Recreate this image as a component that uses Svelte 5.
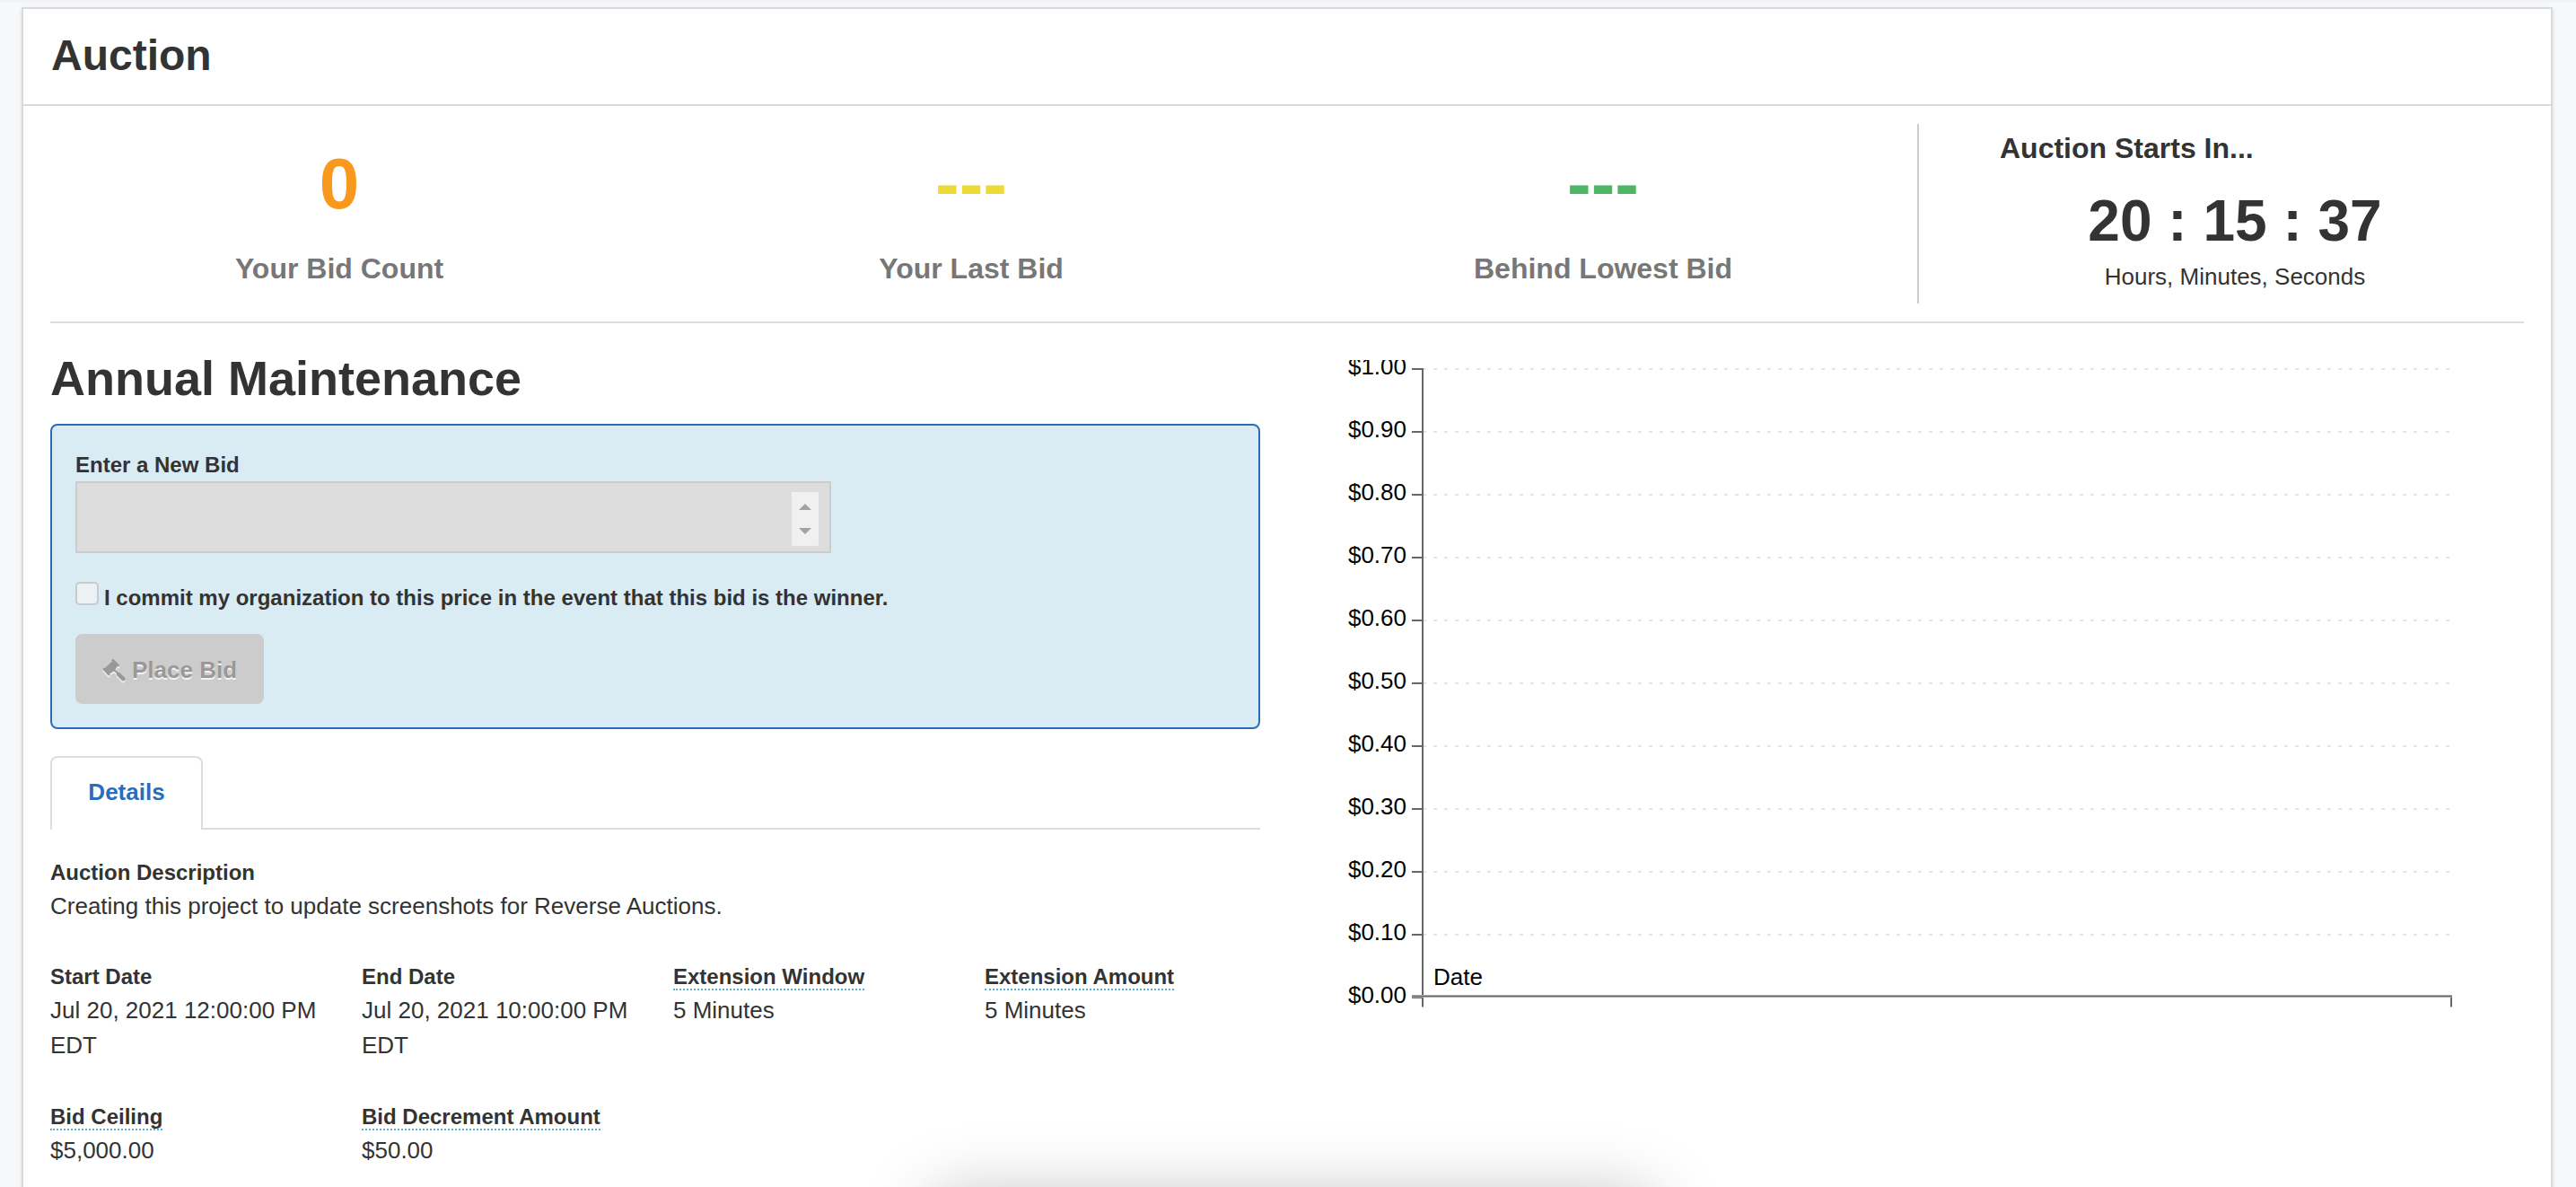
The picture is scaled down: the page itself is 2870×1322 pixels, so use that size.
<script>
  const stats = [
    { value: "0", label: "Your Bid Count", tone: "orange" },
    { value: "---", label: "Your Last Bid", tone: "yellow" },
    { value: "---", label: "Behind Lowest Bid", tone: "green" },
  ];

  const details = [
    { label: "Start Date", value: "Jul 20, 2021 12:00:00 PM EDT" },
    { label: "End Date", value: "Jul 20, 2021 10:00:00 PM EDT" },
    { label: "Extension Window", value: "5 Minutes", hint: true },
    { label: "Extension Amount", value: "5 Minutes", hint: true },
    { label: "Bid Ceiling", value: "$5,000.00", hint: true },
    { label: "Bid Decrement Amount", value: "$50.00", hint: true },
  ];

  // y axis, from $1.00 down to $0.00
  const step = 70;
  const ticks = Array.from({ length: 11 }, (_, i) => ({
    y: 10 + i * step,
    label: "$" + ((10 - i) / 10).toFixed(2),
  }));
</script>

<div class="page">
  <section class="panel">
    <header class="panel-header">
      <h1>Auction</h1>
    </header>

    <div class="stats">
      {#each stats as stat}
        <div class="stat">
          <div class="stat-value {stat.tone}">{stat.value}</div>
          <div class="stat-label">{stat.label}</div>
        </div>
      {/each}
      <div class="countdown">
        <div class="countdown-title">Auction Starts In...</div>
        <div class="countdown-time">20 : 15 : 37</div>
        <div class="countdown-units">Hours, Minutes, Seconds</div>
      </div>
    </div>

    <div class="main">
      <div class="left">
        <h2>Annual Maintenance</h2>

        <div class="bid-box">
          <div class="label">Enter a New Bid</div>
          <div class="bid-input">
            <div class="spinner">
              <svg width="14" height="34" viewBox="0 0 14 34">
                <path d="M7 0 L14 7 H0 Z M0 27 H14 L7 34 Z" fill="#a3a3a3" />
              </svg>
            </div>
          </div>
          <div class="commit">
            <span class="checkbox"></span>
            <span class="label">I commit my organization to this price in the event that this bid is the winner.</span>
          </div>
          <button class="place-bid" disabled>
            <svg class="gavel" width="27" height="27" viewBox="0 0 27 27">
              <path
                d="M10.6 1.4 Q11.6 0.3 12.6 1.3 L18.9 7.4 Q19.4 8.4 18.6 9 Q17.7 9.7 16.9 9.1 L14.4 13 L17.4 15.8 Q18.4 15.3 19.4 16.3 L25.1 21.7 Q26.2 23.2 25 24.5 Q23.5 26.1 21.8 25 L16.3 19.3 Q15.3 18 15.9 17.1 L13 14.5 L8.4 17.2 Q9 18.3 8 19.1 Q7.1 19.8 6.2 19 L0.9 13 Q0.1 12 1.1 11.2 Q2 10.5 2.9 11.1 L10.9 3.4 Q10 2.3 10.6 1.4 Z"
                fill="#999"
              />
            </svg>
            <span>Place Bid</span>
          </button>
        </div>

        <div class="tabs">
          <div class="tab">Details</div>
          <div class="tabs-line"></div>
        </div>

        <div class="description">
          <div class="label">Auction Description</div>
          <div class="value">Creating this project to update screenshots for Reverse Auctions.</div>
        </div>

        <div class="details">
          {#each details as item}
            <div>
              <div class="label"><span class:hint={item.hint}>{item.label}</span></div>
              <div class="value">{item.value}</div>
            </div>
          {/each}
        </div>
      </div>

      <svg class="chart" width="1348" height="760" viewBox="0 0 1348 760">
        {#each ticks as tick, i}
          {#if i < 10}
            <line class="grid" x1="121" x2="1267" y1={tick.y} y2={tick.y} />
          {/if}
          <line class="axis" x1="109" x2="122" y1={tick.y} y2={tick.y} />
          <text x="103" y={tick.y + 6} text-anchor="end">{tick.label}</text>
        {/each}
        <path class="axis" d="M121 9 V720.5" />
        <path class="axis" d="M1267 708 V720.5" />
        <path class="base" d="M109 708.5 H1268" />
        <path class="base-dark" d="M109 708.5 H1268" />
        <text x="133" y="696">Date</text>
      </svg>
    </div>
  </section>
  <div class="dock"></div>
</div>

<style>
  :global(body) {
    overflow: hidden;
  }

  .page {
    height: 1322px;
    box-sizing: border-box;
    padding: 8px 26px 0 24px;
    overflow: hidden;
    position: relative;
    background: #f6f8fa;
    box-shadow: inset 0 3px 3px -1px #eff2f4;
    color: #333;
    font-family: "Liberation Sans", Arial, sans-serif;
    font-size: 26px;
    line-height: 39px;
  }

  .panel {
    box-sizing: border-box;
    height: 1400px;
    border: 2px solid #d9dadb;
    background: #fff;
    box-shadow: 0 2px 4px rgba(0, 0, 0, 0.12);
  }

  .panel-header {
    height: 106px;
    padding-left: 31px;
    border-bottom: 2px solid #d8d8d8;
  }

  h1 {
    margin: 0;
    font-size: 48px;
    line-height: 103px;
  }

  .stats {
    display: grid;
    grid-template-columns: repeat(4, 1fr);
    height: 240px;
  }

  .stat {
    padding-top: 39px;
    text-align: center;
    font-weight: bold;
  }

  .stat-value {
    font-size: 80px;
    line-height: 96px;
  }

  .orange {
    color: #f8981d;
  }

  .yellow {
    color: #ecdb37;
  }

  .green {
    color: #4db564;
  }

  .stat-label {
    margin-top: 22px;
    color: #777;
    font-size: 32px;
    line-height: 48px;
  }

  .countdown {
    box-sizing: border-box;
    height: 200px;
    margin: 20px 0 0 -2px;
    padding-top: 3px;
    border-left: 2px solid #ccc;
    text-align: center;
  }

  .countdown-title {
    padding-left: 90px;
    text-align: left;
    font-size: 32px;
    font-weight: bold;
    line-height: 48px;
  }

  .countdown-time {
    margin: 17px 0 3px;
    font-size: 64px;
    font-weight: bold;
    line-height: 80px;
  }

  .main {
    display: grid;
    grid-template-columns: 1348px 1348px;
    column-gap: 60px;
    align-items: start;
    margin: 0 30px;
    padding-top: 25px;
    border-top: 2px solid #ddd;
  }

  h2 {
    margin: 0 0 15px;
    font-size: 54px;
    line-height: 72px;
  }

  .label {
    font-size: 24px;
    font-weight: bold;
    line-height: 36px;
  }

  .bid-box {
    padding: 26px;
    border: 2px solid #2a6ebb;
    border-radius: 8px;
    background: #d9ebf3;
  }

  .bid-input {
    display: flex;
    justify-content: flex-end;
    box-sizing: border-box;
    width: 842px;
    height: 80px;
    padding: 10px 12px 0 0;
    border: 2px solid #ccc;
    background: #ddd;
  }

  .spinner {
    display: flex;
    justify-content: center;
    align-items: center;
    width: 30px;
    height: 60px;
    border-radius: 0 2px 2px 0;
    background: #f0f0f0;
  }

  .commit {
    display: flex;
    gap: 6px;
    margin-top: 32px;
  }

  .checkbox {
    box-sizing: border-box;
    width: 26px;
    height: 26px;
    border: 2px solid #c8cbcd;
    border-radius: 5px;
    background: #ecf1f4;
  }

  .place-bid {
    display: flex;
    align-items: center;
    gap: 6px;
    width: 210px;
    height: 78px;
    margin: 22px 0 0;
    padding: 3px 0 0 30px;
    border: 0;
    border-radius: 8px;
    background: #ccc;
    color: #999;
    font: bold 26px/39px "Liberation Sans", Arial, sans-serif;
    text-shadow: 0 2px 0 #f4f4f4;
  }

  .gavel {
    filter: drop-shadow(0 2px 0 #f0f0f0);
  }

  .tabs {
    display: flex;
    margin-top: 30px;
  }

  .tab {
    box-sizing: border-box;
    width: 170px;
    height: 82px;
    border: 2px solid #ddd;
    border-bottom: 0;
    border-radius: 8px 8px 0 0;
    color: #2a6ebb;
    font-weight: bold;
    line-height: 77px;
    text-align: center;
  }

  .tabs-line {
    flex: 1;
    border-bottom: 2px solid #ddd;
  }

  .description {
    margin-top: 30px;
  }

  .details {
    display: grid;
    grid-template-columns: repeat(4, 307px);
    gap: 42px 40px;
    margin-top: 41px;
  }

  .hint {
    border-bottom: 2px dotted #5bafd4;
  }

  .chart {
    display: block;
    margin-top: 16px;
    overflow: hidden;
  }

  .chart text {
    fill: #000;
    font-size: 26px;
  }

  .grid {
    stroke: #e5e5e5;
    stroke-width: 2;
    stroke-dasharray: 4 8;
  }

  .axis {
    fill: none;
    stroke: #666;
    stroke-width: 2;
  }

  .base {
    stroke: #aaa;
    stroke-width: 3;
  }

  .base-dark {
    stroke: #666;
    stroke-width: 1;
  }

  /* only the shadow of the dock reaches into the window */
  .dock {
    position: absolute;
    left: 1040px;
    bottom: -310px;
    width: 800px;
    height: 300px;
    box-shadow: 0 0 70px rgba(0, 0, 0, 0.25);
  }
</style>
